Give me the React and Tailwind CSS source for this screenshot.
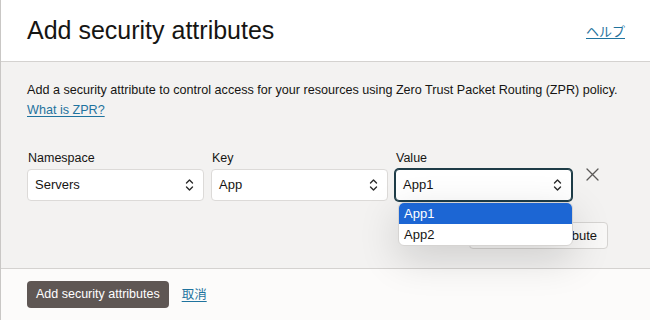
import React from 'react';

const font = { fontFamily: '"Liberation Sans", Arial, "Noto Sans CJK JP", sans-serif' };

// small up/down chevron used by the native-looking selects
function Chevrons() {
  return (
    <svg width="9" height="14" viewBox="0 0 9 14" fill="none" stroke="#2b2b2b" strokeWidth="1.4" strokeLinecap="round" strokeLinejoin="round">
      <path d="M1.5 5 L4.5 2 L7.5 5" />
      <path d="M1.5 9 L4.5 12 L7.5 9" />
    </svg>
  );
}

function Select({ label, value, focused, children }) {
  return (
    <div className="flex flex-col">
      <label className="text-[12.5px] leading-[16px] text-[#161513] pl-[1px] mb-[3px]">{label}</label>
      <div className="relative">
        <div
          className={`h-[32px] flex items-center justify-between pl-[7px] pr-[9px] rounded-[4px] bg-white text-[13px] text-[#161513] ${
            focused ? 'border border-[#1e3c47] shadow-[0_0_0_1px_#1e3c47]' : 'border border-[#dcdad8]'
          }`}
        >
          <span>{value}</span>
          <Chevrons />
        </div>
        {children}
      </div>
    </div>
  );
}

export default function App() {
  return (
    <div className="w-[650px] h-[320px] overflow-hidden border-l border-[#c9c7c5] flex flex-col" style={font}>
      {/* header */}
      <div className="h-[62px] shrink-0 bg-white border-b border-[#d4d2d0] flex items-center justify-between pl-[26px] pr-[25px]">
        <h1 className="text-[25px] leading-none text-[#161513]">Add security attributes</h1>
        <a className="text-[13px] text-[#1f739e] underline underline-offset-2" style={{ fontFamily: '"Noto Sans CJK JP", sans-serif' }}>ヘルプ</a>
      </div>

      {/* body */}
      <div className="h-[206px] shrink-0 bg-[#f3f2f1] pt-[18px] pl-[26px] pr-[10px]">
        <p className="text-[12.6px] leading-[20px] text-[#161513]">
          Add a security attribute to control access for your resources using Zero Trust Packet Routing (ZPR) policy.
        </p>
        <a className="block text-[12.6px] leading-[20px] text-[#1f739e] underline underline-offset-2 w-fit">What is ZPR?</a>

        <div className="mt-[30px] flex items-start">
          <div className="grid grid-cols-[177px_177px_177px] gap-x-[7px]">
            <Select label="Namespace" value="Servers" />
            <Select label="Key" value="App" />
            <Select label="Value" value="App1" focused>
              <div className="absolute z-10 left-[3px] top-[33px] w-[175px] bg-white rounded-[6px] overflow-hidden border border-[#d6d4d2] shadow-[0_12px_40px_rgba(0,0,0,0.16)] text-[13px]">
                <div className="h-[21px] flex items-center pl-[5px] bg-[#1c66d4] text-white">App1</div>
                <div className="h-[21px] flex items-center pl-[5px] text-[#161513]">App2</div>
              </div>
            </Select>
          </div>
          <button className="ml-[12px] mt-[16px] w-[16px] h-[16px] flex items-center justify-center">
            <svg width="13" height="13" viewBox="0 0 13 13" stroke="#5b5957" strokeWidth="1.3" strokeLinecap="round">
              <path d="M1 1 L12 12 M12 1 L1 12" />
            </svg>
          </button>
        </div>

        <div className="mt-[21px] pl-[442px]">
          <button className="h-[27px] w-[139px] bg-[#f9f8f7] border border-[#d6d4d2] rounded-[4px] text-[13px] text-[#161513] text-right pr-[10px]">
            Another attribute
          </button>
        </div>
      </div>

      {/* footer */}
      <div className="flex-1 bg-[#fcfbfa] border-t border-[#d4d2d0] flex items-start gap-[13px] pl-[26px] pt-[12px]">
        <button className="h-[27px] px-[9px] rounded-[4px] bg-[#5f5754] text-white text-[12.5px]">Add security attributes</button>
        <a className="mt-[5px] text-[12.5px] leading-[16px] text-[#1f739e] underline underline-offset-2" style={{ fontFamily: '"Noto Sans CJK JP", sans-serif' }}>取消</a>
      </div>
    </div>
  );
}
